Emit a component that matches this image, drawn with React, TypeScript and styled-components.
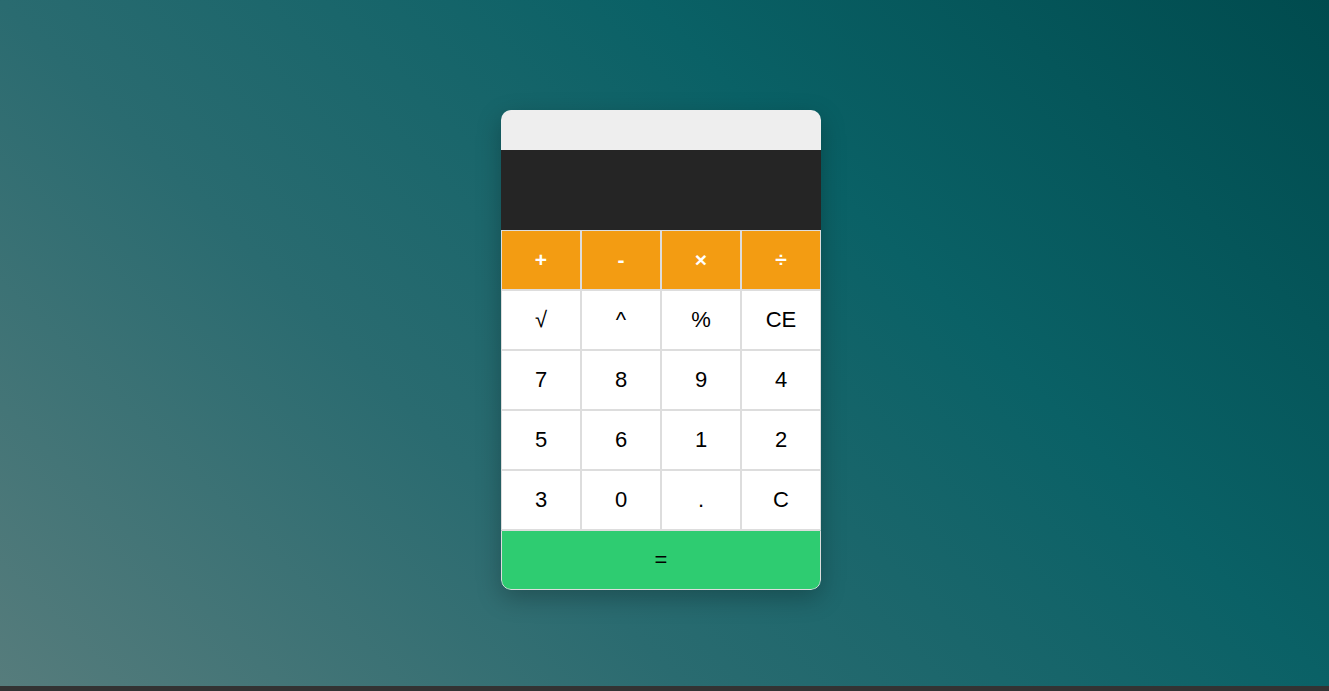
import React from "react";
import styled, { createGlobalStyle } from "styled-components";

const Global = createGlobalStyle`
  html, body { margin: 0; padding: 0; background: #2b2b2b; }
  body { font-family: "Liberation Sans", Arial, sans-serif; }
`;

const Page = styled.div`
  height: 691px;
  border-bottom: 5px solid #333;
  background: linear-gradient(45deg, #567c7c 0%, #2a6b70 34%, #0a6166 66%, #004b4e 100%);
  display: flex;
  justify-content: center;
  align-items: flex-start;
  padding-top: 110px;
  padding-right: 7px;
  box-sizing: border-box;
`;

const Calc = styled.div`
  width: 320px;
  border-radius: 10px;
  overflow: hidden;
  box-shadow: 0 8px 24px rgba(0, 0, 0, 0.25);
  display: flex;
  flex-direction: column;
`;

const TopBar = styled.div`
  height: 40px;
  background: #eeeeee;
`;

const Display = styled.div`
  height: 80px;
  background: #252525;
`;

const Grid = styled.div`
  display: grid;
  grid-template-columns: repeat(4, 80px);
`;

const Key = styled.button<{ $op?: boolean }>`
  height: 60px;
  box-sizing: border-box;
  border: 1px solid #dddddd;
  margin: 0;
  padding: 0;
  background: ${(p) => (p.$op ? "#f39c12" : "#ffffff")};
  color: ${(p) => (p.$op ? "#ffffff" : "#000000")};
  font-family: "Liberation Sans", Arial, sans-serif;
  font-size: ${(p) => (p.$op ? "21px" : "22px")};
  font-weight: ${(p) => (p.$op ? 700 : 400)};
  display: flex;
  align-items: center;
  justify-content: center;
  cursor: pointer;
`;

const Equals = styled.button`
  height: 60px;
  box-sizing: border-box;
  border: 1px solid #dddddd;
  border-radius: 0 0 10px 10px;
  background: #2ecc71;
  color: #000;
  font-family: "Liberation Sans", Arial, sans-serif;
  font-size: 22px;
  margin: 0;
  padding: 0;
  cursor: pointer;
`;

const ops = ["+", "-", "×", "÷"];
const keys = ["√", "^", "%", "CE", "7", "8", "9", "4", "5", "6", "1", "2", "3", "0", ".", "C"];

export default function App() {
  return (
    <>
      <Global />
      <Page>
        <Calc>
          <TopBar />
          <Display />
          <Grid>
            {ops.map((o) => (
              <Key key={o} $op>
                {o}
              </Key>
            ))}
            {keys.map((k) => (
              <Key key={k}>{k}</Key>
            ))}
          </Grid>
          <Equals>=</Equals>
        </Calc>
      </Page>
    </>
  );
}
